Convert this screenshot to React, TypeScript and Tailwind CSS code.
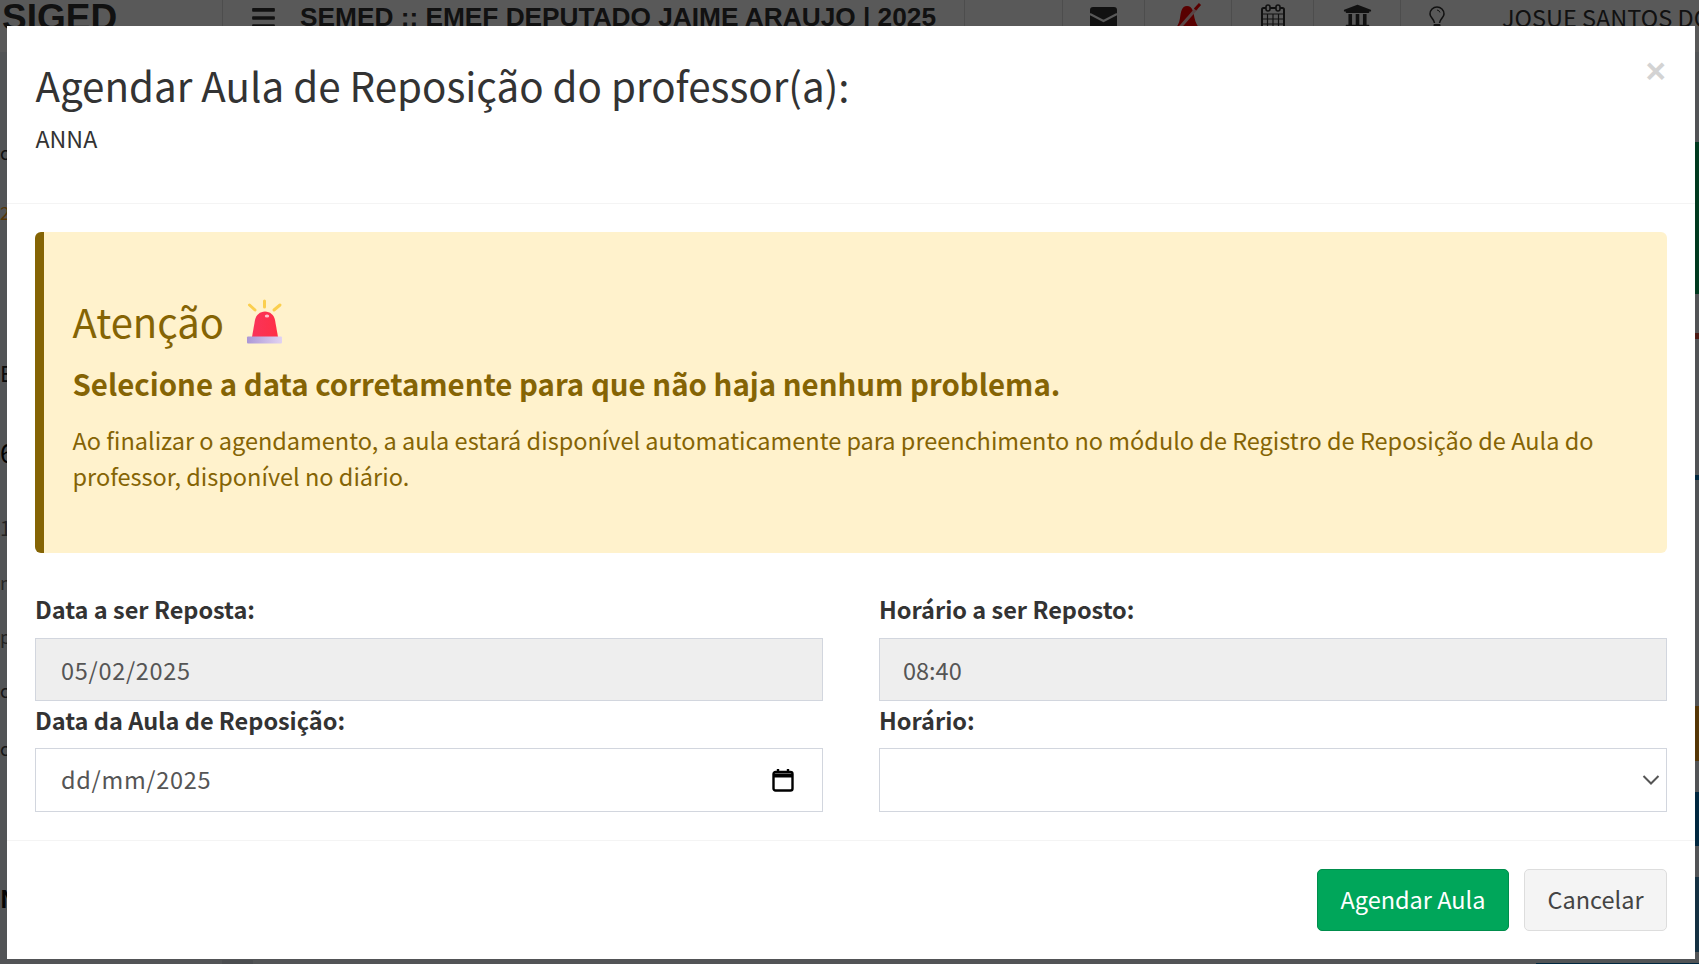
import React from "react";
import { FaBars, FaUniversity } from "react-icons/fa";

const sans = "font-['Noto_Sans_CJK_SC','Noto_Sans',sans-serif]";

function Envelope() {
  return (
    <svg width="27" height="24" viewBox="0 0 27 24">
      <rect width="27" height="24" rx="3" fill="#333" />
      <path d="M0 7 L13.500 14 L27 7" fill="none" stroke="#fff" strokeWidth="2" />
    </svg>
  );
}

function BellOff() {
  return (
    <svg width="28" height="30" viewBox="0 0 28 30">
      <path d="M13 3 C7.500 3 7 9 6 15 C5.500 20 3 23 1 27 H26 C24 23 21.500 20 20.500 15 C19.500 9 18.500 3 13 3 Z" fill="#ff0000" />
      <path d="M23 5 L1 30" stroke="#ffc8c8" strokeWidth="3" />
      <path d="M26 1 L21 6.500" stroke="#ff0000" strokeWidth="3" />
    </svg>
  );
}

function Bulb() {
  return (
    <svg width="16" height="28" viewBox="0 0 16 28" fill="none" stroke="#333">
      <path d="M5.500 17 C5 13 1 11.500 1 8 A7 7 0 0 1 15 8 C15 11.500 11 13 10.500 17" strokeWidth="1.600" />
      <path d="M8 4 A3.500 3.500 0 0 1 11 6.500" strokeWidth="1" />
      <rect x="4.500" y="18" width="7" height="8" rx="1" fill="#333" stroke="none" />
    </svg>
  );
}

function CalendarGrid() {
  return (
    <svg width="24" height="28" viewBox="0 0 24 28" fill="none" stroke="#333" strokeWidth="1.5">
      <rect x="1" y="4" width="22" height="23" rx="1.5" strokeWidth="2" />
      <rect x="5" y="1" width="4" height="6" rx="2" fill="#fff" strokeWidth="1.6" />
      <rect x="15" y="1" width="4" height="6" rx="2" fill="#fff" strokeWidth="1.6" />
      <path d="M1 10h22M1 15h22M1 20h22M6.500 10v17M12 10v17M17.500 10v17" strokeWidth="1.200" />
    </svg>
  );
}

function Siren() {
  return (
    <svg width="40" height="50" viewBox="0 0 40 50">
      <defs>
        <linearGradient id="dome" x1="0" y1="0" x2="1" y2="0">
          <stop offset="0" stopColor="#f9345a" />
          <stop offset="1" stopColor="#ff2f45" />
        </linearGradient>
        <linearGradient id="base" x1="0" y1="0" x2="1" y2="0">
          <stop offset="0" stopColor="#ab97d6" />
          <stop offset="1" stopColor="#e2d3f2" />
        </linearGradient>
      </defs>
      <path d="M7 41 L10 24 C11 19 15 15.500 20 15.500 C25 15.500 29 19 30 24 L33 41 Z" fill="url(#dome)" />
      <ellipse cx="22" cy="20" rx="2.200" ry="1.600" fill="#ffc0cc" />
      <rect x="2" y="40.500" width="35" height="7" rx="1" fill="url(#base)" />
      <g stroke="#fbcf4e" strokeWidth="3" strokeLinecap="round">
        <path d="M19.500 5 V11" />
        <path d="M4.500 9 L10 14" />
        <path d="M35 9 L29 14" />
      </g>
    </svg>
  );
}

const leftRows: [number, string, string][] = [
  [86, "", ""],
  [28, "c", "text-[#333] text-[18px]"],
  [32, "", ""],
  [28, "2", "text-[#f39c12] text-[18px]"],
  [132, "", ""],
  [28, "E", "text-[#222] text-[22px]"],
  [52, "", ""],
  [28, "6", "text-[#000] text-[26px]"],
  [48, "", ""],
  [28, "1", "text-[#666] text-[20px]"],
  [26, "", ""],
  [28, "n", "text-[#666] text-[18px]"],
  [26, "", ""],
  [28, "pi", "text-[#666] text-[18px]"],
  [26, "", ""],
  [28, "c", "text-[#444] text-[18px]"],
  [30, "", ""],
  [28, "c", "text-[#444] text-[18px]"],
  [122, "", ""],
  [28, "N", "text-[#111] text-[24px] font-bold"],
];

const rightRows: [number, string][] = [
  [90, "bg-transparent"],
  [152, "bg-[#00a65a]"],
  [39, "bg-transparent"],
  [6, "bg-[#dd4b39]"],
  [136, "bg-transparent"],
  [5, "bg-[#0073b7]"],
  [226, "bg-transparent"],
  [55, "bg-[#f39c12]"],
  [31, "bg-transparent"],
  [54, "bg-[#0073b7]"],
  [31, "bg-transparent"],
  [75, "bg-[#3c8dbc]"],
];

function NavCell({ w, pt, children }: { w: string; pt: string; children?: React.ReactNode }) {
  return <div className={`${w} ${pt} h-full shrink-0 flex justify-center border-l border-[#ddd]`}>{children}</div>;
}

export default function App() {
  return (
    <div className={`relative h-[964px] w-[1699px] overflow-hidden bg-[#ecf0f5] ${sans}`}>
      <header className="flex h-[52px] bg-white text-[#333]">
        <div className="w-[222px] h-full shrink-0 overflow-hidden pl-[2px] font-['Liberation_Sans',sans-serif] font-bold text-[37px] leading-[36px] text-[#333]">
          SIGED
        </div>
        <div className="flex w-[742px] h-full shrink-0 border-l border-[#ddd] pl-[29px] pt-[5px]">
          <FaBars className="w-[23px] h-[26px] shrink-0" />
          <div className="ml-[25px] font-['Liberation_Sans',sans-serif] font-bold text-[26.250px] leading-[24px] whitespace-nowrap">
            SEMED :: EMEF DEPUTADO JAIME ARAUJO | 2025
          </div>
        </div>
        <div className="w-[98px] h-full shrink-0 border-l border-[#ddd]" />
        <NavCell w="w-[82px]" pt="pt-[7px]"><Envelope /></NavCell>
        <NavCell w="w-[87px]" pt="pt-[3px]"><BellOff /></NavCell>
        <NavCell w="w-[82px]" pt="pt-[4px]"><CalendarGrid /></NavCell>
        <NavCell w="w-[87px]" pt="pt-[3px]"><FaUniversity className="w-[29px] h-[29px]" /></NavCell>
        <div className="min-w-0 flex-1 h-full overflow-hidden border-l border-[#ddd] flex pl-[28px]">
          <div className="pt-[6px] shrink-0"><Bulb /></div>
          <span className="ml-[57px] pt-[1px] text-[23.500px] leading-[32px] whitespace-nowrap">JOSUE SANTOS DOS</span>
        </div>
      </header>

      <main className="flex justify-between h-[908px]">
        <div className="w-[7px] overflow-hidden">
          {leftRows.map(([h, t, c], i) => (
            <div key={i} style={{ height: h }} className={`leading-[28px] ${c}`}>{t}</div>
          ))}
        </div>
        <div className="w-[4px]">
          {rightRows.map(([h, c], i) => (
            <div key={i} style={{ height: h }} className={c} />
          ))}
        </div>
      </main>
      <div className="flex h-[4px] justify-between">
        <div className="ml-[222px] w-[31px] bg-[#d8dde4]" />
        <div className="mt-[3px] w-[163px] bg-[#0073b7]" />
      </div>

      <div className="fixed inset-0 bg-black/65 pl-[7px] pr-[4px] pt-[26px] pb-[5px] text-[#333]">
        <div className="h-[933px] bg-white">
          <div className="relative h-[178px] border-b border-[#f4f4f4] pl-[28.500px] pr-[29px] pt-[29px]">
            <h4 className="text-[40.300px] leading-[60px] font-normal">Agendar Aula de Reposição do professor(a):</h4>
            <p className="mt-[5px] text-[23.200px] leading-[36px]">ANNA</p>
            <button className="absolute right-[29px] top-[23px] font-['Liberation_Sans',sans-serif] font-bold text-[35px] leading-[44px] text-[#d3d3d3]">×</button>
          </div>

          <div className="h-[637px] border-b border-[#f4f4f4] px-[28px] pt-[28px]">
            <div className="h-[321px] rounded-[6px] border-l-[9px] border-[#856404] bg-[#fff2cc] pl-[28.500px] pr-[40px] pt-[59px] text-[#856404]">
              <div className="flex items-start">
                <span className="text-[40px] leading-[60px]">Atenção</span>
                <span className="ml-[21.500px] mt-[5px]"><Siren /></span>
              </div>
              <div className="mt-[12px] text-[29.400px] leading-[40px] font-bold">Selecione a data corretamente para que não haja nenhum problema.</div>
              <p className="mt-[19px] text-[23.500px] leading-[36px]">
                Ao finalizar o agendamento, a aula estará disponível automaticamente para preenchimento no módulo de Registro de Reposição de Aula do professor, disponível no diário.
              </p>
            </div>

            <div className="mt-[27px] grid grid-cols-[788px_788px] gap-x-[56px]">
              <div>
                <label className="block h-[58px] text-[23.500px] leading-[58px] font-bold">Data a ser Reposta:</label>
                <input readOnly value="05/02/2025" className="block h-[63px] w-full border border-[#d2d6de] bg-[#eee] px-[25px] text-[23.500px] tracking-[0.7px] text-[#555]" />
                <label className="block h-[47px] text-[23.500px] leading-[38px] font-bold">Data da Aula de Reposição:</label>
                <div className="flex h-[64px] w-full items-center justify-between border border-[#d2d6de] bg-white pl-[25px] pr-[28px] text-[23.500px] tracking-[0.7px] text-[#555]">
                  <span>dd/mm/2025</span>
                  <svg width="22" height="24" viewBox="0 0 22 24" fill="none" stroke="#000">
                    <rect x="1.500" y="4" width="19" height="18.500" rx="2" strokeWidth="2.400" />
                    <path d="M1.500 7.500h19" strokeWidth="4" />
                    <path d="M6 1v4M16 1v4" strokeWidth="2.400" />
                  </svg>
                </div>
              </div>
              <div>
                <label className="block h-[58px] text-[23.500px] leading-[58px] font-bold">Horário a ser Reposto:</label>
                <input readOnly value="08:40" className="block h-[63px] w-full border border-[#d2d6de] bg-[#eee] px-[23px] text-[23.500px] text-[#555]" />
                <label className="block h-[47px] text-[23.500px] leading-[38px] font-bold">Horário:</label>
                <div className="flex h-[64px] w-full items-center justify-end border border-[#d2d6de] bg-white pr-[6px]">
                  <svg width="18" height="12" viewBox="0 0 18 12" fill="none" stroke="#555" strokeWidth="2">
                    <path d="M1.500 2 L9 9.500 L16.500 2" />
                  </svg>
                </div>
              </div>
            </div>
          </div>

          <div className="flex justify-end gap-[15px] px-[28px] pt-[28px]">
            <button className="h-[62px] w-[192px] rounded-[5px] border border-[#008d4c] bg-[#00a65a] text-[23.500px] text-white">Agendar Aula</button>
            <button className="h-[62px] w-[143px] rounded-[5px] border border-[#ddd] bg-[#f4f4f4] text-[23.500px] text-[#444]">Cancelar</button>
          </div>
        </div>
      </div>
    </div>
  );
}
